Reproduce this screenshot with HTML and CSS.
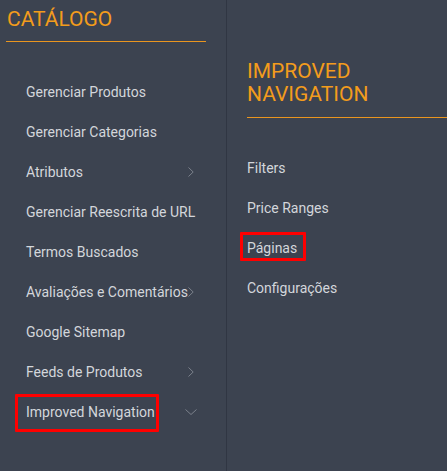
FILE: index.html
```html
<!DOCTYPE html>
<html lang="pt">
<head>
<meta charset="utf-8">
<title>Catálogo</title>
<link rel="stylesheet" href="styles.css">
</head>
<body>
<div class="panel">
  <nav class="col col-main">
    <h2 class="col-title">CATÁLOGO</h2>
    <ul class="menu">
      <li class="item"><span class="label">Gerenciar Produtos</span></li>
      <li class="item"><span class="label">Gerenciar Categorias</span></li>
      <li class="item"><span class="label">Atributos</span><svg class="chev" width="6" height="10" viewBox="0 0 6 10"><path d="M0.5 0.5 L5.2 5 L0.5 9.5" fill="none" stroke="#7b818b" stroke-width="1"/></svg></li>
      <li class="item"><span class="label">Gerenciar Reescrita de URL</span></li>
      <li class="item"><span class="label">Termos Buscados</span></li>
      <li class="item"><span class="label">Avaliações e Comentários</span><svg class="chev" width="6" height="10" viewBox="0 0 6 10"><path d="M0.5 0.5 L5.2 5 L0.5 9.5" fill="none" stroke="#7b818b" stroke-width="1"/></svg></li>
      <li class="item"><span class="label">Google Sitemap</span></li>
      <li class="item"><span class="label">Feeds de Produtos</span><svg class="chev" width="6" height="10" viewBox="0 0 6 10"><path d="M0.5 0.5 L5.2 5 L0.5 9.5" fill="none" stroke="#7b818b" stroke-width="1"/></svg></li>
      <li class="item marked marked-main"><span class="label label-active">Improved Navigation</span><svg class="chev chev-down" width="12" height="6" viewBox="0 0 12 6"><path d="M0.5 0.5 L6 5.5 L11.5 0.5" fill="none" stroke="#7b818b" stroke-width="1"/></svg></li>
    </ul>
  </nav>
  <nav class="col col-sub">
    <h2 class="col-title">IMPROVED<br>NAVIGATION</h2>
    <ul class="menu">
      <li class="item"><span class="label">Filters</span></li>
      <li class="item"><span class="label">Price Ranges</span></li>
      <li class="item marked marked-sub"><span class="label">Páginas</span></li>
      <li class="item"><span class="label">Configurações</span></li>
    </ul>
  </nav>
</div>
</body>
</html>
```
FILE: styles.css
```css
*, *::before, *::after { box-sizing: border-box; }
html, body {
  margin: 0;
  padding: 0;
  background: #3c4350;
  height: 100%;
}
body {
  font-family: Roboto, "Liberation Sans", Arial, sans-serif;
  overflow: hidden;
}
.panel {
  display: flex;
  height: 471px;
  width: 447px;
}
.col {
  display: flex;
  flex-direction: column;
}
.col-main {
  width: 227px;
  border-right: 1px solid #303643;
  padding-top: 7px;
}
.col-sub {
  flex: 1;
  padding-top: 60px;
}
.col-title {
  margin: 0;
  font-weight: 400;
  font-size: 21px;
  color: #f39c1c;
  width: 200px;
  border-bottom: 1px solid #e9951f;
}
.col-main .col-title {
  line-height: 24px;
  margin-left: 6px;
  padding-left: 1px;
  padding-bottom: 10px;
}
.col-sub .col-title {
  line-height: 23px;
  margin-left: 20px;
  padding-bottom: 11px;
}
.menu {
  list-style: none;
  margin: 0;
  padding: 0;
}
.col-main .menu { margin-top: 30px; }
.col-sub .menu { margin-top: 30px; }
.item {
  display: flex;
  align-items: center;
  height: 40px;
  font-size: 14px;
  color: #d3d6db;
  position: relative;
}
.col-main .item {
  padding-left: 26px;
  padding-right: 32px;
}
.col-sub .item {
  padding-left: 20px;
}
.label { white-space: nowrap; }
.chev {
  margin-left: auto;
  flex: none;
}
.chev-down {
  margin-right: -3px;
}
.marked::after {
  content: "";
  position: absolute;
  border: 3px solid #ff0000;
  border-radius: 1px;
}
.marked-main::after {
  left: 15px;
  top: 2px;
  width: 144px;
  height: 38px;
}
.marked-sub::after {
  left: 13px;
  top: 4px;
  width: 66px;
  height: 29px;
}
```
